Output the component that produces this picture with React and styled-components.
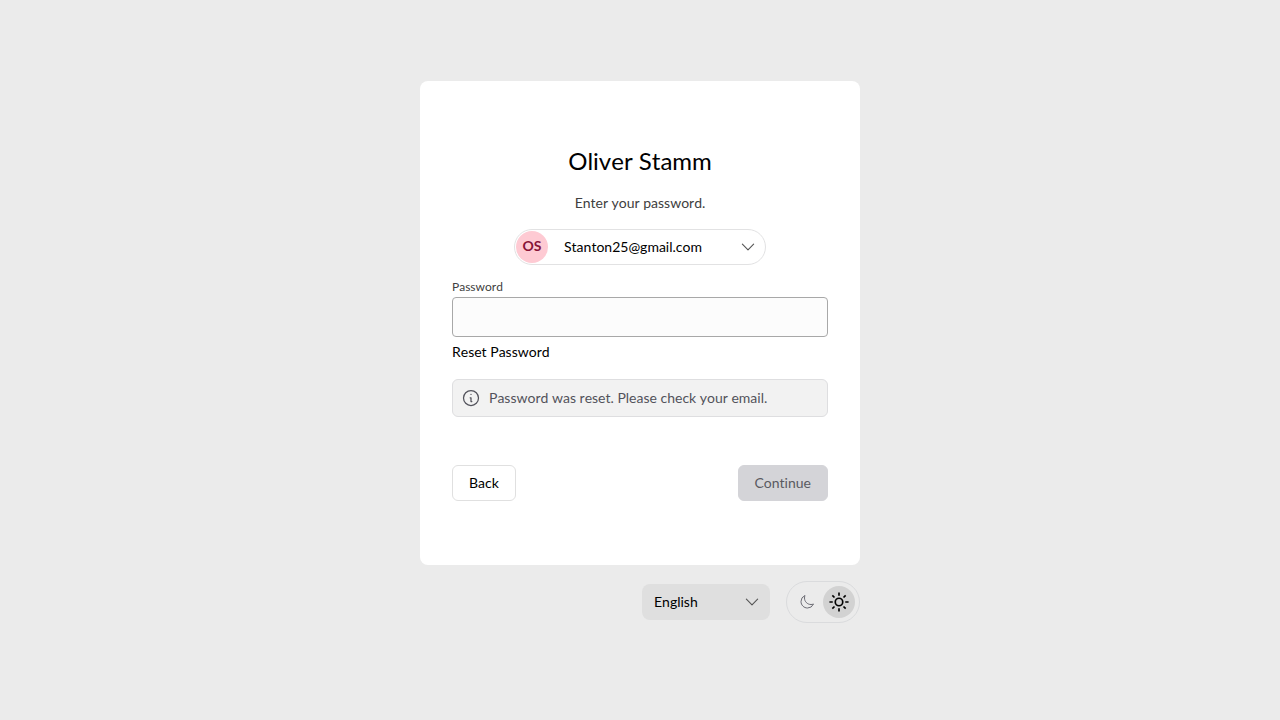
import React, { useState } from "react";
import styled, { createGlobalStyle } from "styled-components";

const GlobalStyle = createGlobalStyle`
  *, *::before, *::after { box-sizing: border-box; }
  body {
    margin: 0;
    background: #ebebeb;
    color: #000;
    font: 400 14px/20px Lato, sans-serif;
    font-kerning: none;
    font-variant-ligatures: none;
  }
  button, input, select {
    font: inherit;
    font-kerning: inherit;
    font-variant-ligatures: inherit;
    color: inherit;
    margin: 0;
  }
`;

const Page = styled.div`
  min-height: 100vh;
  display: flex;
  align-items: center;
  justify-content: center;
`;

const Shell = styled.div`
  width: 100%;
  max-width: 440px;
  padding-bottom: 16px;
`;

const Card = styled.main`
  display: flex;
  flex-direction: column;
  padding: 64px 32px;
  border-radius: 8px;
  background: #fff;
`;

const Title = styled.h1`
  margin: 0;
  font-size: 24px;
  line-height: 32px;
  font-weight: 400;
  text-align: center;
`;

const Subtitle = styled.p`
  margin: 16px 0;
  color: #404040;
  text-align: center;
`;

const Account = styled.button`
  display: flex;
  align-items: center;
  align-self: center;
  width: 252px;
  height: 36px;
  padding: 0 8px 0 1px;
  border: 1px solid #e2e2e3;
  border-radius: 18px;
  background: #fff;
  cursor: pointer;
`;

const Avatar = styled.span`
  width: 32px;
  height: 32px;
  border-radius: 50%;
  background: #fecad3;
  color: #881337;
  line-height: 30px;
  font-weight: 700;
`;

const AccountName = styled.span`
  flex: 1;
  padding-left: 16px;
  text-align: left;
`;

const Field = styled.div`
  display: flex;
  flex-direction: column;
  align-items: flex-start;
  margin-top: 12px;
`;

const Label = styled.label`
  color: #404040;
  font-size: 12px;
  line-height: 20px;
`;

const Input = styled.input`
  width: 100%;
  height: 40px;
  padding: 8px;
  border: 1px solid #a8a8a8;
  border-radius: 4px;
  background: #fcfcfc;
  outline: none;
`;

const ResetLink = styled.a`
  margin-top: 5px;
  color: #000;
  text-decoration: none;
`;

const Notice = styled.div`
  display: flex;
  align-items: center;
  gap: 8px;
  margin-top: 17px;
  padding: 8px;
  border: 1px solid #dedee0;
  border-radius: 6px;
  background: #f2f2f2;
  color: #52525b;
`;

const Actions = styled.div`
  display: flex;
  justify-content: space-between;
  margin-top: 48px;
`;

const Button = styled.button`
  height: 36px;
  padding: 0 16px;
  border: 1px solid ${(p) => (p.$primary ? "#d4d4d8" : "#e0e0e0")};
  border-radius: 6px;
  background: ${(p) => (p.$primary ? "#d4d4d8" : "#fff")};
  color: ${(p) => (p.$primary ? "#5a5a61" : "#000")};
`;

const Footer = styled.footer`
  display: flex;
  align-items: center;
  justify-content: flex-end;
  gap: 16px;
  margin-top: 16px;
`;

const SelectBox = styled.div`
  display: grid;
  width: 128px;
  align-items: center;

  & > * { grid-area: 1 / 1; }
  & > svg { justify-self: end; margin-right: 9px; pointer-events: none; }
`;

const Select = styled.select`
  appearance: none;
  width: 100%;
  height: 36px;
  padding: 0 32px 0 12px;
  border: 0;
  border-radius: 8px;
  background: #dfdfdf;
`;

const ThemeSwitch = styled.div`
  display: flex;
  padding: 4px;
  border: 1px solid #dadbdd;
  border-radius: 21px;
`;

const ThemeButton = styled.button`
  display: grid;
  place-items: center;
  width: 32px;
  height: 32px;
  padding: 0;
  border: 0;
  border-radius: 50%;
  background: ${(p) => (p.$active ? "#d2d2d2" : "transparent")};
  color: ${(p) => (p.$active ? "#000" : "#52525b")};
`;

const Icon = styled.svg.attrs({
  viewBox: "0 0 24 24",
  fill: "none",
  stroke: "currentColor",
  strokeLinejoin: "round",
  "aria-hidden": true,
})`
  flex: none;
  width: ${(p) => p.$size || 20}px;
  height: ${(p) => p.$size || 20}px;
`;

const Chevron = () => (
  <Icon $size={18} strokeWidth="1.5" strokeLinecap="round" color="#555">
    <path d="M19.5 8.25l-7.5 7.5-7.5-7.5" />
  </Icon>
);

export default function App() {
  const [password, setPassword] = useState("");

  return (
    <Page>
      <GlobalStyle />
      <Shell>
        <Card>
          <Title>Oliver Stamm</Title>
          <Subtitle>Enter your password.</Subtitle>
          <Account type="button">
            <Avatar>OS</Avatar>
            <AccountName>Stanton25@gmail.com</AccountName>
            <Chevron />
          </Account>
          <Field>
            <Label htmlFor="password">Password</Label>
            <Input
              id="password"
              type="password"
              value={password}
              onChange={(e) => setPassword(e.target.value)}
            />
            <ResetLink href="#reset">Reset Password</ResetLink>
          </Field>
          <Notice role="status">
            <Icon strokeWidth="1.5" strokeLinecap="round">
              <path d="M13 16.25h-1v-4.5h-1m1-4h.01M21 12a9 9 0 11-18 0 9 9 0 0118 0z" />
            </Icon>
            <span>Password was reset. Please check your email.</span>
          </Notice>
          <Actions>
            <Button type="button">Back</Button>
            <Button type="submit" $primary disabled={!password}>Continue</Button>
          </Actions>
        </Card>
        <Footer>
          <SelectBox>
            <Select aria-label="Language" defaultValue="en">
              <option value="en">English</option>
            </Select>
            <Chevron />
          </SelectBox>
          <ThemeSwitch>
            <ThemeButton type="button" aria-label="Dark theme">
              <Icon $size={16} strokeWidth="1.25">
                <path d="M21.75 15A9.72 9.72 0 0118 15.75c-5.4 0-9.75-4.35-9.75-9.75 0-1.33.27-2.6.75-3.75A9.75 9.75 0 003 11.25C3 16.64 7.36 21 12.75 21a9.75 9.75 0 009-6z" />
              </Icon>
            </ThemeButton>
            <ThemeButton type="button" aria-label="Light theme" $active>
              <Icon strokeWidth="2">
                <circle cx="12" cy="12" r="4.5" />
                <path d="M12 .5v4M12 19.5v4M.5 12h4M19.5 12h4M4 4l2.6 2.6M17.4 17.4L20 20M4 20l2.6-2.6M17.4 6.6L20 4" />
              </Icon>
            </ThemeButton>
          </ThemeSwitch>
        </Footer>
      </Shell>
    </Page>
  );
}
